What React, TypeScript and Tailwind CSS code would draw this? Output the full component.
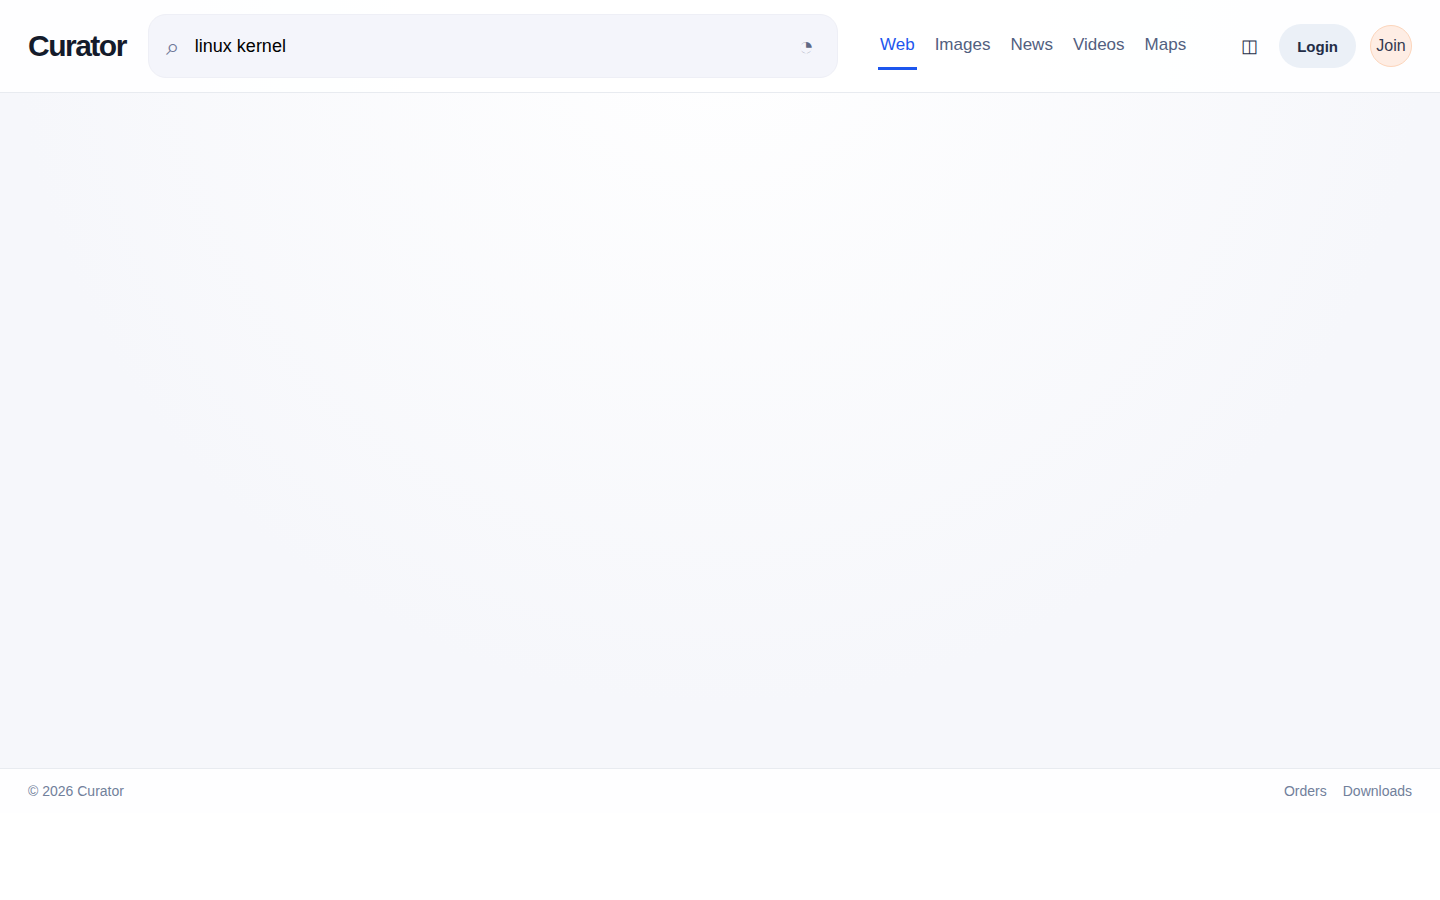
import { useState } from "react";

const tabs = ["Web", "Images", "News", "Videos", "Maps"];
const footerLinks = ["Orders", "Downloads"];

const Header = () => {
  const [query, setQuery] = useState("linux kernel");
  const [active, setActive] = useState("Web");

  return (
    <header className="flex items-center border-b border-[#e8ebf0] bg-white/90 px-7 py-3.5">
      <a href="#" className="mr-[22px] text-[30px] leading-9 font-bold tracking-tighter text-[#141b2b]">
        Curator
      </a>

      <form
        role="search"
        onSubmit={(event) => event.preventDefault()}
        className="flex h-16 min-w-0 flex-1 items-center rounded-[18px] border border-[#eeeff6] bg-[#f4f5fb] pr-4 pl-[17px]"
      >
        <span aria-hidden="true" className="w-[29px] pt-0.5 text-[24px] leading-7 text-[#6f7899]">
          ⌕
        </span>
        <input
          type="text"
          aria-label="Search"
          value={query}
          onChange={(event) => setQuery(event.target.value)}
          className="h-10 min-w-0 flex-1 bg-transparent text-[18px] text-black outline-none"
        />
        <button type="submit" aria-label="Submit search" className="w-[30px] text-[26px] leading-7 text-[#5f6885]">
          ◔
        </button>
      </form>

      <nav className="ml-10 flex gap-4">
        {tabs.map((tab) => (
          <a
            key={tab}
            href="#"
            onClick={() => setActive(tab)}
            className={
              tab === active
                ? "border-b-3 border-[#1d56ee] px-0.5 pt-3 pb-3 text-[17px] leading-5 text-[#1d56ee]"
                : "border-b-3 border-transparent px-0.5 pt-3 pb-3 text-[17px] leading-5 text-[#526080]"
            }
          >
            {tab}
          </a>
        ))}
      </nav>

      <div className="ml-[45px] flex items-center gap-3.5">
        <button type="button" aria-label="Toggle panel" className="w-8 text-[18px] leading-7 text-[#27304a]">
          ◫
        </button>
        <button type="button" className="h-11 rounded-full bg-[#ebf0f7] px-[18px] pt-0.5 text-[15px] font-bold text-[#232d47]">
          Login
        </button>
        <button
          type="button"
          className="flex size-[42px] items-center justify-center rounded-full border border-[#fcd5bb] bg-[#feede4] text-[16px] text-[#343a50]"
        >
          Join
        </button>
      </div>
    </header>
  );
};

const Footer = () => (
  <footer className="flex items-center justify-between border-t border-[#e8ebf0] bg-white/90 px-7 py-3 text-[14px] leading-5 text-[#71809b]">
    <p>© 2026 Curator</p>
    <div className="flex gap-4">
      {footerLinks.map((link) => (
        <a key={link} href="#">
          {link}
        </a>
      ))}
    </div>
  </footer>
);

export default function App() {
  return (
    <div className="min-h-screen bg-white font-['Liberation_Sans',Arial,sans-serif]">
      <div className="bg-[radial-gradient(circle_at_top,#ffffff_0%,#f6f7fb_65%)]">
        <Header />
        <main className="h-[75vh]" />
        <Footer />
      </div>
    </div>
  );
}
